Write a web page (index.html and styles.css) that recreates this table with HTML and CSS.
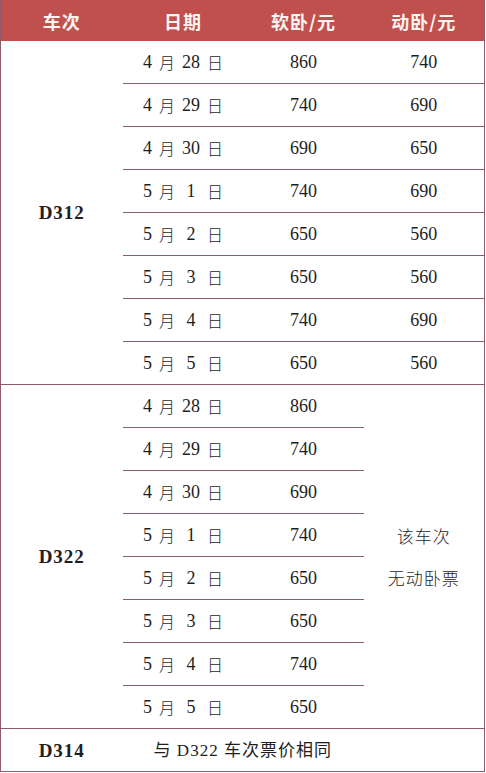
FILE: index.html
```html
<!DOCTYPE html>
<html lang="zh">
<head>
<meta charset="utf-8">
<link rel="stylesheet" href="styles.css">
</head>
<body>
<table class="fares">
  <colgroup>
    <col class="c1"><col class="c2"><col class="c3"><col class="c4">
  </colgroup>
  <thead>
    <tr class="head">
      <th>车次</th><th>日期</th><th>软卧/元</th><th>动卧/元</th>
    </tr>
  </thead>
  <tbody class="group">
    <tr>
      <td class="train" rowspan="8">D312</td>
      <td class="date"><span class="d"><span class="m">4</span><span class="u">月</span><span class="n">28</span><span class="u">日</span></span></td>
      <td class="num">860</td><td class="num">740</td>
    </tr>
    <tr class="line"><td class="date"><span class="d"><span class="m">4</span><span class="u">月</span><span class="n">29</span><span class="u">日</span></span></td><td class="num">740</td><td class="num">690</td></tr>
    <tr class="line"><td class="date"><span class="d"><span class="m">4</span><span class="u">月</span><span class="n">30</span><span class="u">日</span></span></td><td class="num">690</td><td class="num">650</td></tr>
    <tr class="line"><td class="date"><span class="d"><span class="m">5</span><span class="u">月</span><span class="n">1</span><span class="u">日</span></span></td><td class="num">740</td><td class="num">690</td></tr>
    <tr class="line"><td class="date"><span class="d"><span class="m">5</span><span class="u">月</span><span class="n">2</span><span class="u">日</span></span></td><td class="num">650</td><td class="num">560</td></tr>
    <tr class="line"><td class="date"><span class="d"><span class="m">5</span><span class="u">月</span><span class="n">3</span><span class="u">日</span></span></td><td class="num">650</td><td class="num">560</td></tr>
    <tr class="line"><td class="date"><span class="d"><span class="m">5</span><span class="u">月</span><span class="n">4</span><span class="u">日</span></span></td><td class="num">740</td><td class="num">690</td></tr>
    <tr class="line"><td class="date"><span class="d"><span class="m">5</span><span class="u">月</span><span class="n">5</span><span class="u">日</span></span></td><td class="num">650</td><td class="num">560</td></tr>
  </tbody>
  <tbody class="group">
    <tr>
      <td class="train" rowspan="8">D322</td>
      <td class="date"><span class="d"><span class="m">4</span><span class="u">月</span><span class="n">28</span><span class="u">日</span></span></td>
      <td class="num">860</td>
      <td class="none" rowspan="8"><div class="nonetext">该车次<br>无动卧票</div></td>
    </tr>
    <tr class="line"><td class="date"><span class="d"><span class="m">4</span><span class="u">月</span><span class="n">29</span><span class="u">日</span></span></td><td class="num">740</td></tr>
    <tr class="line"><td class="date"><span class="d"><span class="m">4</span><span class="u">月</span><span class="n">30</span><span class="u">日</span></span></td><td class="num">690</td></tr>
    <tr class="line"><td class="date"><span class="d"><span class="m">5</span><span class="u">月</span><span class="n">1</span><span class="u">日</span></span></td><td class="num">740</td></tr>
    <tr class="line"><td class="date"><span class="d"><span class="m">5</span><span class="u">月</span><span class="n">2</span><span class="u">日</span></span></td><td class="num">650</td></tr>
    <tr class="line"><td class="date"><span class="d"><span class="m">5</span><span class="u">月</span><span class="n">3</span><span class="u">日</span></span></td><td class="num">650</td></tr>
    <tr class="line"><td class="date"><span class="d"><span class="m">5</span><span class="u">月</span><span class="n">4</span><span class="u">日</span></span></td><td class="num">740</td></tr>
    <tr class="line"><td class="date"><span class="d"><span class="m">5</span><span class="u">月</span><span class="n">5</span><span class="u">日</span></span></td><td class="num">650</td></tr>
  </tbody>
  <tbody class="group">
    <tr class="last">
      <td class="train">D314</td>
      <td class="same" colspan="3">与 D322 车次票价相同</td>
    </tr>
  </tbody>
</table>
</body>
</html>
```

FILE: styles.css
```css
html, body {
  margin: 0;
  padding: 0;
  background: #ffffff;
}

.fares {
  width: 485px;
  border-collapse: collapse;
  table-layout: fixed;
  font-family: "Liberation Serif", "Noto Sans CJK SC", serif;
  color: #1e1e1e;
  border-left: 1px solid #8d5d6e;
  border-right: 1px solid #8d5d6e;
  border-bottom: 1px solid #8d5d6e;
}

.c1 { width: 122px; }
.c2 { width: 121px; }
.c3 { width: 120px; }
.c4 { width: 121px; }

.head th {
  height: 41px;
  padding: 0;
  background: #c0504d;
  color: #fff4f2;
  font-family: "Noto Sans CJK SC", sans-serif;
  font-weight: 700;
  font-size: 18px;
  letter-spacing: 1px;
  border: none;
  vertical-align: middle;
  line-height: 1;
}

.fares td {
  height: 42px;
  padding: 0;
  text-align: center;
  vertical-align: middle;
  line-height: 1;
}

.group {
  border-top: 1px solid #8d5d6e;
}

.group:first-of-type {
  border-top: none;
}

.line td {
  border-top: 1px solid #8d5d6e;
}

.train {
  font-family: "Liberation Serif", serif;
  font-weight: 700;
  font-size: 19px;
  letter-spacing: 1px;
}

.num {
  font-family: "Liberation Serif", serif;
  font-size: 18px;
}

.d {
  display: inline-flex;
  align-items: center;
  gap: 7px;
  vertical-align: middle;
}

.d .m, .d .n {
  font-family: "Liberation Serif", serif;
  font-size: 18px;
  text-align: center;
}

.d .m { width: 9px; }
.d .n { width: 18px; }

.d .u {
  font-family: "Noto Sans CJK SC", sans-serif;
  font-size: 16px;
  font-weight: 300;
}

.none {
  font-family: "Noto Sans CJK SC", sans-serif;
  font-size: 17px;
  font-weight: 300;
  letter-spacing: 1px;
}

.nonetext {
  line-height: 42px;
}

.same {
  font-family: "Liberation Serif", "Noto Sans CJK SC", serif;
  font-size: 17px;
  padding-right: 121px !important;
  letter-spacing: 1px;
}

.last td {
  height: 42px;
}
```
